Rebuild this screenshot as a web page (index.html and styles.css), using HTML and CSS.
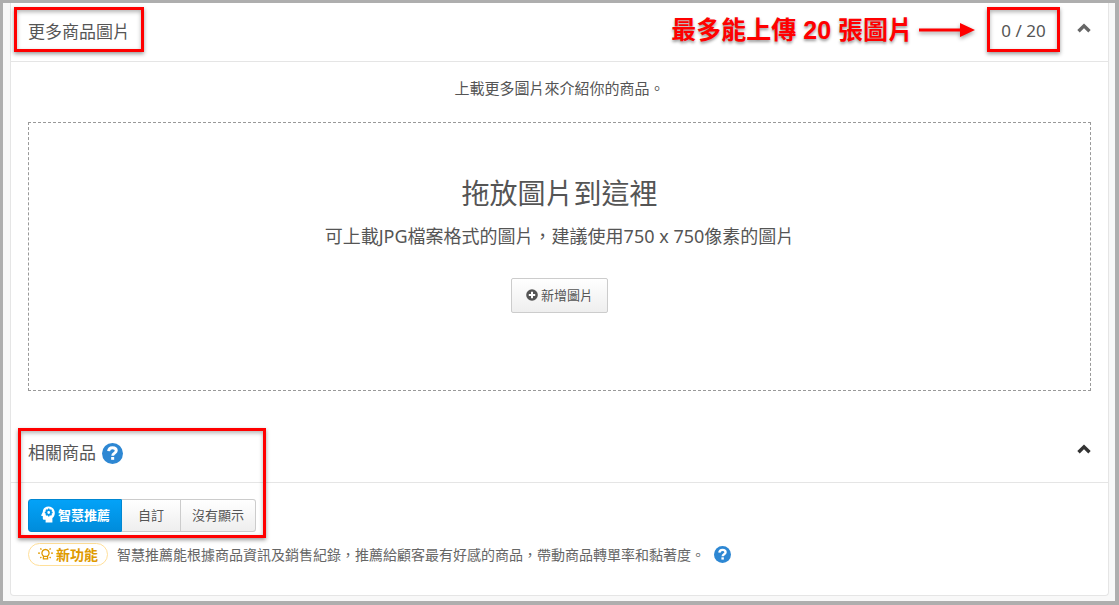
FILE: index.html
```html
<!DOCTYPE html>
<html lang="zh-Hant">
<head>
  <meta charset="UTF-8">
  <meta name="viewport" content="width=device-width, initial-scale=1.0">
  <title>更多商品圖片</title>
  <link rel="stylesheet" href="styles.css">
</head>
<body>

<main class="card">
  <section class="panel">
    <header class="panel-header">
      <h2 class="marked">更多商品圖片</h2>
      <div class="header-tools">
        <strong class="callout">最多能上傳 20 張圖片</strong>
        <svg class="arrow" width="56" height="16" viewBox="0 0 56 16" aria-hidden="true">
          <path d="M0 6.500h41V1l15 7-15 7V9.500H0z" fill="#f00"/>
        </svg>
        <span class="counter">0 / 20</span>
        <button type="button" class="toggle muted" aria-label="收合更多商品圖片">
          <svg width="14" height="10" viewBox="0 0 14 10"><path d="M1.500 8.300L7 2.800l5.500 5.500" fill="none" stroke="currentColor" stroke-width="3.400"/></svg>
        </button>
      </div>
    </header>
    <div class="panel-body">
      <p class="intro">上載更多圖片來介紹你的商品。</p>
      <div class="dropzone">
        <h3>拖放圖片到這裡</h3>
        <p>可上載JPG檔案格式的圖片，建議使用750 x 750像素的圖片</p>
        <button type="button" class="btn btn-add">
          <svg width="12" height="12" viewBox="0 0 12 12" aria-hidden="true"><circle cx="6" cy="6" r="5.800" fill="#555"/><path d="M6 2.800v6.400M2.800 6h6.400" stroke="#fff" stroke-width="2"/></svg>
          新增圖片
        </button>
      </div>
    </div>
  </section>

  <section class="panel related">
    <header class="panel-header">
      <h2>相關商品</h2>
      <a href="#" class="help" aria-label="相關商品說明">
        <svg width="21" height="21" viewBox="0 0 20 20"><circle cx="10" cy="10" r="10" fill="#2d87d3"/><path d="M6.300 7.700C6.500 5.500 8 4.500 10 4.500c2.100 0 3.600 1.100 3.600 2.900 0 2.300-3.400 2.200-3.400 4.700" fill="none" stroke="#fff" stroke-width="2.800"/><path d="M8.700 13.300h2.900v2.700H8.700z" fill="#fff"/></svg>
      </a>
      <div class="header-tools">
        <button type="button" class="toggle" aria-label="收合相關商品">
          <svg width="14" height="10" viewBox="0 0 14 10"><path d="M1.500 8.300L7 2.800l5.500 5.500" fill="none" stroke="currentColor" stroke-width="3.400"/></svg>
        </button>
      </div>
    </header>
    <div class="panel-body">
      <div class="btn-group" role="group" aria-label="相關商品">
        <button type="button" class="btn active" aria-pressed="true">
          <svg width="14" height="17" viewBox="0 0 14 17" aria-hidden="true">
            <path d="M7.500.500C3.900.500 1.800 2.900 1.800 6L.3 9c-.2.500 0 .9.500.9h1v2.300c0 1 .6 1.500 1.500 1.500h1.300v2.800h6.800v-4.400c1.500-1.200 2.400-3.100 2.400-5.200C13.800 3.300 11.100.500 7.500.500z" fill="#fff"/>
            <circle cx="7.700" cy="6.500" r="2.300" fill="none" stroke="#0397ea" stroke-width="1.800"/>
            <path d="M7.700 2.600v1.500M7.700 8.900v1.500M3.800 6.500h1.500M10.100 6.500h1.500M4.900 3.700L6 4.800M9.400 8.200l1.100 1.100M10.500 3.700L9.400 4.800M6 8.200L4.900 9.300" stroke="#0397ea" stroke-width="1.400"/>
          </svg>
          智慧推薦
        </button>
        <button type="button" class="btn custom" aria-pressed="false">自訂</button>
        <button type="button" class="btn" aria-pressed="false">沒有顯示</button>
      </div>
      <div class="note">
        <span class="badge">
          <svg width="15" height="13" viewBox="0 0 15 13" fill="none" stroke="#e09a00" stroke-width="1.300" aria-hidden="true">
            <path d="M5.700 9.200a3.600 3.600 0 1 1 3.600 0M5.400 9.400h4.200v2.500H5.400zM0 6.200h2M13 6.200h2M2.300 1.500l1.200 1.100M12.700 1.500l-1.200 1.100M2.300 11l1.100-1M12.700 11l-1.100-1"/>
          </svg>
          新功能
        </span>
        <p>智慧推薦能根據商品資訊及銷售紀錄，推薦給顧客最有好感的商品，帶動商品轉單率和黏著度。</p>
        <a href="#" class="help" aria-label="智慧推薦說明">
          <svg width="17" height="17" viewBox="0 0 20 20"><circle cx="10" cy="10" r="10" fill="#2d87d3"/><path d="M6.300 7.700C6.500 5.500 8 4.500 10 4.500c2.100 0 3.600 1.100 3.600 2.900 0 2.300-3.400 2.200-3.400 4.700" fill="none" stroke="#fff" stroke-width="2.800"/><path d="M8.700 13.300h2.900v2.700H8.700z" fill="#fff"/></svg>
        </a>
      </div>
    </div>
  </section>
</main>

</body>
</html>
```
FILE: styles.css
```css
*, *::before, *::after { box-sizing: border-box; }
body { margin: 0; min-height: 100vh; display: flex; border: solid #aeaeae; border-width: 3px 4px 4px 3px; padding: 0 6px 5px 7px; background-color: #f8f8f8; color: #555; font-family: "Noto Sans", "Noto Sans CJK TC", sans-serif; }
h2, h3, p { margin: 0; font-weight: normal; }
button { font-family: inherit; cursor: pointer; }
svg { display: block; flex: none; }

.card { flex: 1; background-color: #fff; border: 1px solid #e5e5e5; border-top: none; border-radius: 0 0 4px 4px; }
.panel { position: relative; }
.panel-header { display: flex; align-items: center; height: 59px; padding: 0 17px; border-bottom: 1px solid #e5e5e5; }
.panel-header h2 { font-size: 17px; line-height: 24px; }
.header-tools { display: flex; align-items: center; margin-left: auto; padding-bottom: 5px; }
.panel-body { padding: 15px 17px 33px; }
.related .panel-body { padding: 16px 17px 28px; }

/* red markers */
.marked::before, .related::after { content: ""; position: absolute; border: 3px solid #f00; box-shadow: 0 2px 4px rgba(0, 0, 0, 0.4), inset 0 2px 4px rgba(0, 0, 0, 0.3); pointer-events: none; }
.marked::before { top: 4px; left: 3px; width: 130px; height: 45px; }
.related::after { top: 4px; left: 7px; width: 248px; height: 110px; }
.callout { color: #f00; font: bold 25px/32px "Liberation Sans", "Noto Sans CJK TC", sans-serif; text-shadow: 0 2px 3px rgba(0, 0, 0, 0.4); }
.arrow { margin: 0 12px 0 6px; filter: drop-shadow(0 2px 2px rgba(0, 0, 0, 0.4)); }
.counter { width: 73px; height: 45px; border: 3px solid #f00; box-shadow: 0 2px 4px rgba(0, 0, 0, 0.4), inset 0 2px 4px rgba(0, 0, 0, 0.3); font-size: 17px; line-height: 42px; text-align: center; }

.toggle { margin: 0 0 3px 17px; padding: 0; border: none; background: none; color: #333; }
.toggle.muted { color: #666; }

.intro { margin-bottom: 23px; font-size: 15px; line-height: 22px; text-align: center; }
.dropzone { display: flex; flex-direction: column; align-items: center; min-height: 269px; padding: 50px 16px; border: 1px dashed #999; }
.dropzone h3 { font-size: 28px; line-height: 40px; }
.dropzone p { margin: 10px 0 29px; font-size: 18px; line-height: 26px; }

.btn { display: flex; align-items: center; gap: 3px; height: 33px; padding: 0 11px 2px; border: 1px solid #ccc; background: linear-gradient(#fff, #eee); color: #555; font-size: 13px; }
.btn-add { height: 35px; padding: 0 14px 2px; border-radius: 2px; }
.btn-group { display: flex; }
.btn-group .btn + .btn { border-left: none; }
.btn-group .btn:last-child { border-radius: 0 3px 3px 0; }
.btn.active { padding-left: 12px; border-color: #0087d2; border-radius: 3px 0 0 3px; background: linear-gradient(#03a2f8, #008cdb); color: #fff; font-weight: bold; }
.btn.custom { padding: 0 16px 2px; }

.note { display: flex; align-items: center; gap: 9px; margin-top: 11px; }
.note p { font-size: 14px; line-height: 23px; color: #666; }
.badge { display: flex; align-items: center; gap: 3px; flex: none; height: 23px; padding: 0 9px 2px; border: 1px solid #ffe09a; border-radius: 12px; color: #e09a00; font-size: 14px; font-weight: bold; }
.help { margin-left: 6px; }
.note .help { margin-left: 0; }
```
